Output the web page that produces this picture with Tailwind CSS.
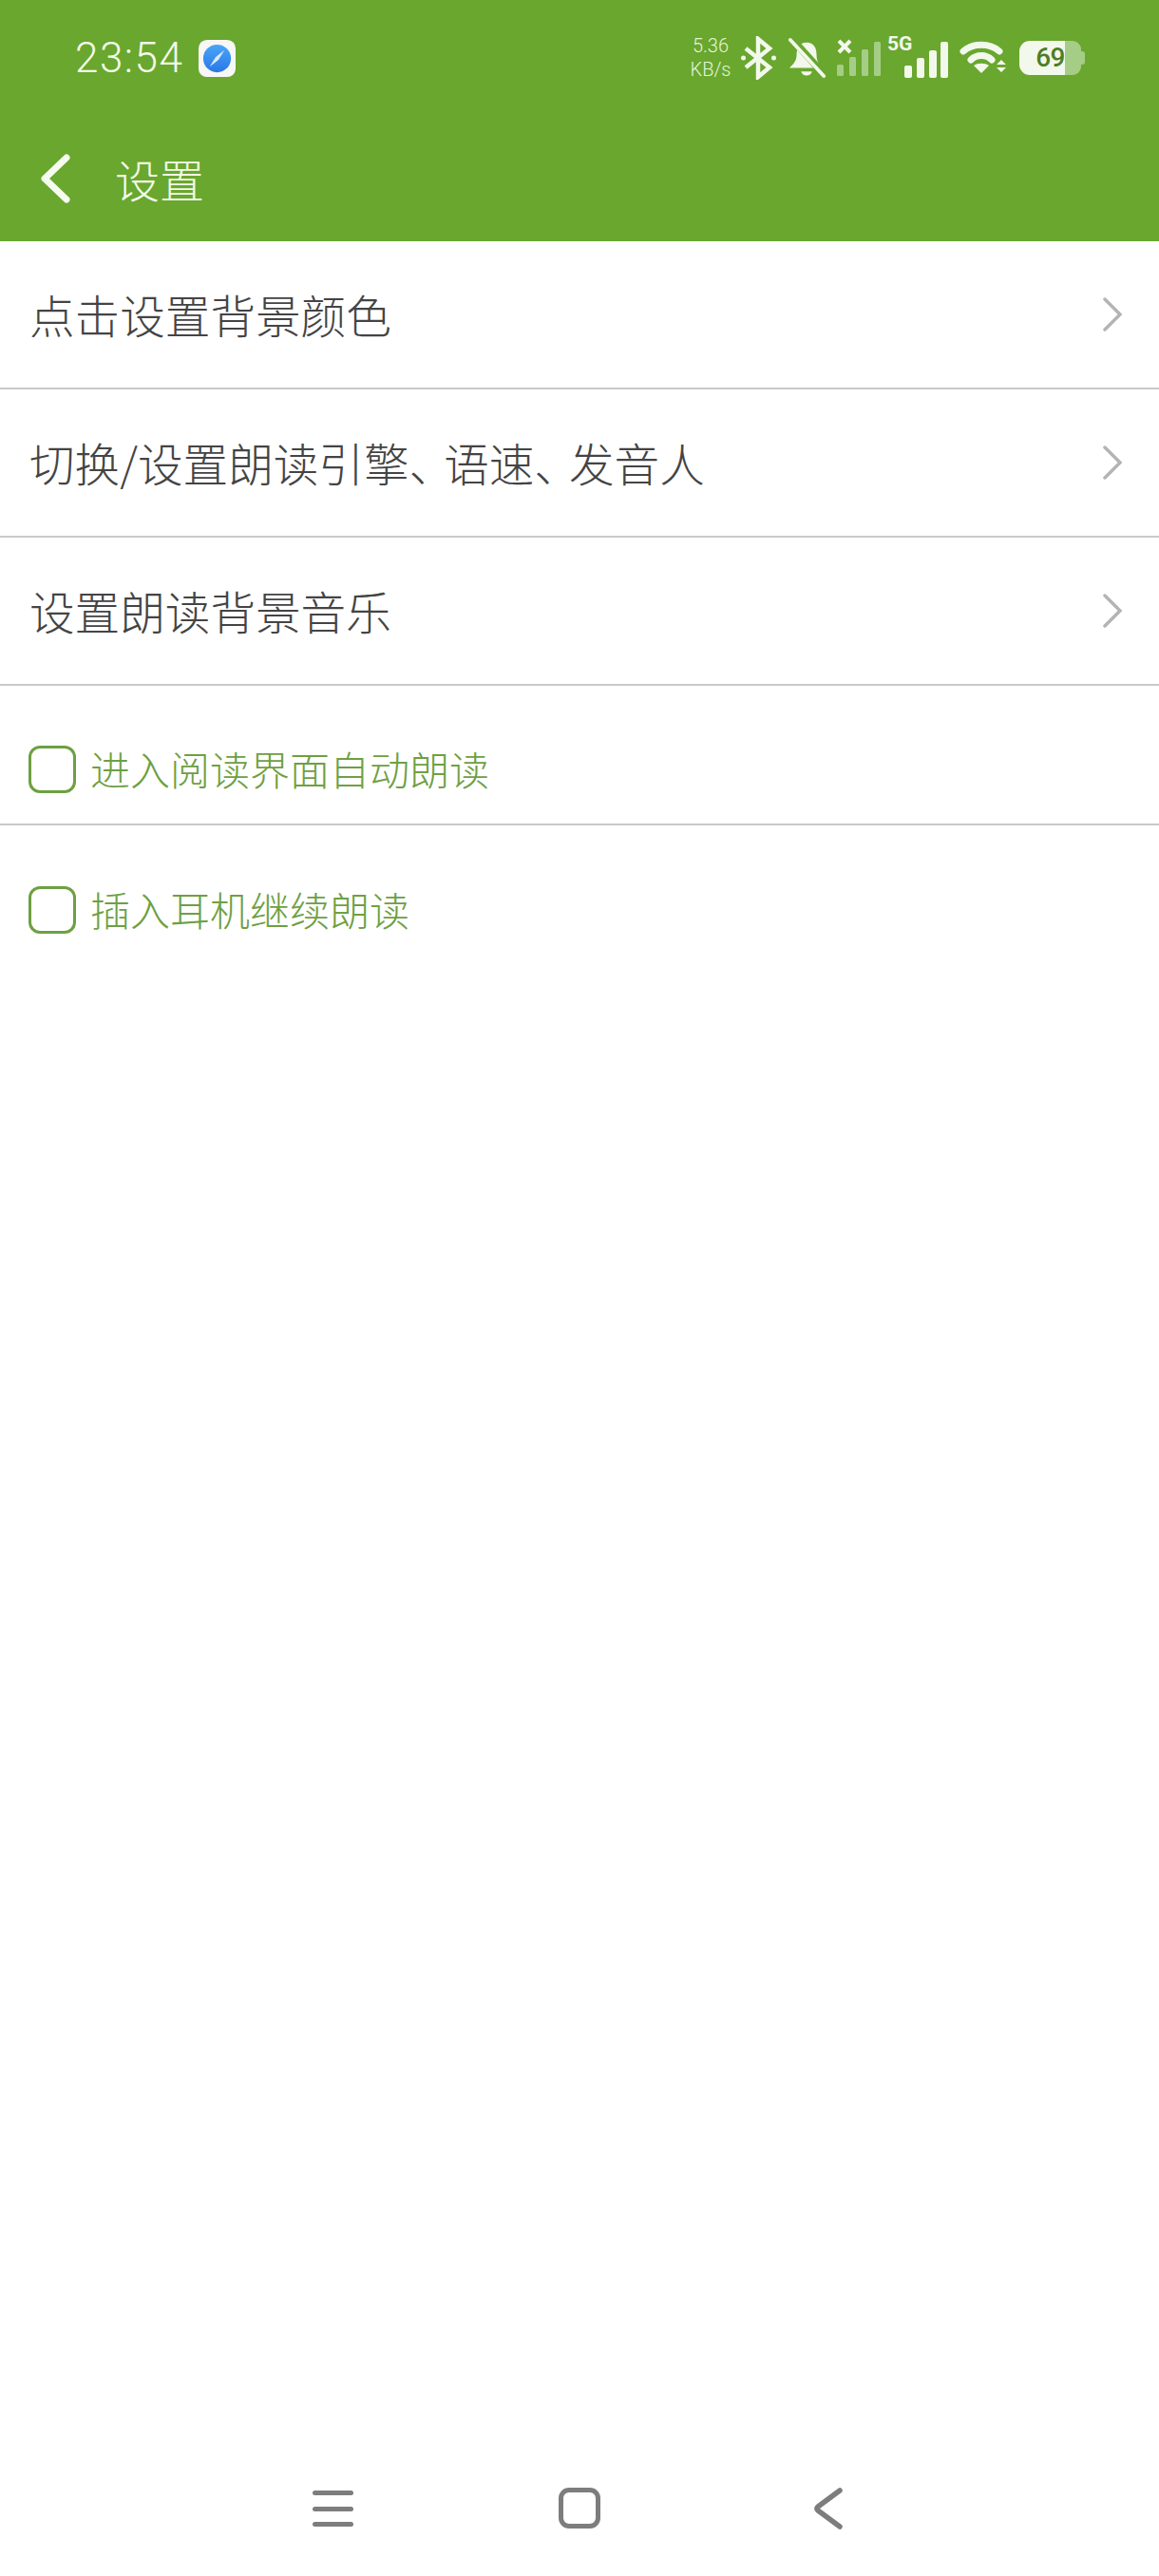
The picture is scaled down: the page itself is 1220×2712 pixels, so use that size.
<!DOCTYPE html>
<html lang="zh-CN">
<head>
<meta charset="utf-8">
<title>设置</title>
<script src="https://cdn.jsdelivr.net/npm/@tailwindcss/browser@4"></script>
</head>
<body class="m-0 bg-white font-['Noto_Sans_CJK_SC','Noto_Sans',sans-serif]">
<div class="relative flex h-[2712px] w-[1220px] flex-col overflow-hidden bg-white">
  <header class="flex h-[254px] flex-col bg-[#69a72e] text-[#f3fbe9]">
    <div class="flex h-[122px] items-center justify-between pl-[79px] pr-[77px]">
      <div class="flex items-center gap-[16px]">
        <span class="font-['Roboto',sans-serif] text-[44px] leading-none font-light tracking-[1.5px]">23:54</span>
        <svg width="39" height="39" viewBox="0 0 40 40">
          <defs><linearGradient id="compass" x1="0" y1="0" x2="0" y2="1"><stop offset="0" stop-color="#4aa5f7"/><stop offset="1" stop-color="#2a78e6"/></linearGradient></defs>
          <rect width="40" height="40" rx="9" fill="#f7f7f5"/>
          <circle cx="20" cy="20" r="15" fill="url(#compass)"/>
          <path d="M28 11 L21.5 21.5 L12 29 L18.5 18.5 Z" fill="#d6eafc"/>
        </svg>
      </div>
      <div class="flex items-center">
        <div class="flex w-[44px] flex-col items-center font-['Roboto',sans-serif] text-[20px] leading-[25px] font-light text-[#e6f3d8]">
          <span>5.36</span><span>KB/s</span>
        </div>
        <svg class="ml-[9px]" width="40" height="46" viewBox="0 0 40 46" fill="none" stroke="#f3f8ec" stroke-width="4.5">
          <path d="M6 13 L31 33 L19 43 V3 L31 13 L6 33"/>
          <circle cx="3.5" cy="23" r="2.5" fill="#f3f8ec" stroke="none"/>
          <circle cx="35.5" cy="23" r="2.5" fill="#f3f8ec" stroke="none"/>
        </svg>
        <svg class="ml-[11px]" width="40" height="44" viewBox="0 0 42 44">
          <path d="M20 5 C28 5 31 11 31 18 C31 25 33 28 37 33 H1 C6 28 9 25 9 18 C9 11 12 5 20 5 Z" fill="#f3f8ec"/>
          <path d="M14 37 H26 C25 43 15 43 14 37 Z" fill="#f3f8ec"/>
          <path d="M3 0 L40 41" stroke="#69a72e" stroke-width="8"/>
          <path d="M2 2 L39 42" stroke="#f3f8ec" stroke-width="4" stroke-linecap="round"/>
        </svg>
        <svg class="ml-[10px]" width="48" height="40" viewBox="0 0 48 40">
          <path d="M3 2 L15 14 M15 2 L3 14" stroke="#f3f8ec" stroke-width="4" fill="none"/>
          <rect x="1" y="27" width="7" height="12" rx="1.5" fill="#a5cd86"/>
          <rect x="14" y="19" width="7" height="20" rx="1.5" fill="#a5cd86"/>
          <rect x="27" y="11" width="7" height="28" rx="1.5" fill="#a5cd86"/>
          <rect x="40" y="3" width="7" height="36" rx="1.5" fill="#a5cd86"/>
        </svg>
        <div class="relative ml-[6px] h-[42px] w-[64px]">
          <span class="absolute left-0 top-[-4px] font-['Roboto',sans-serif] text-[21px] leading-none font-bold text-[#f3f8ec]">5G</span>
          <svg class="absolute bottom-0 right-0" width="46" height="38" viewBox="0 0 46 38" fill="#f3f8ec">
            <rect x="0" y="25" width="8" height="13" rx="2"/>
            <rect x="13" y="17" width="8" height="21" rx="2"/>
            <rect x="26" y="9" width="8" height="29" rx="2"/>
            <rect x="38" y="0" width="8" height="38" rx="2"/>
          </svg>
        </div>
        <svg class="ml-[12px]" width="51" height="36" viewBox="0 0 51 36" fill="none" stroke="#f3f8ec" stroke-width="7" stroke-linecap="round">
          <path d="M4 11 C14 2 32 2 42 11"/>
          <path d="M12 20 C18 14 28 14 34 20"/>
          <path d="M23 34 L15 26 C19 23 27 23 31 26 Z" fill="#f3f8ec" stroke="none"/>
          <path d="M44 20 L49 25 H39 Z M39 28 H49 L44 33 Z" fill="#f3f8ec" stroke="none"/>
        </svg>
        <div class="relative ml-[12px] flex h-[36px] w-[70px] items-center">
          <div class="flex h-[36px] w-[48px] items-center justify-end rounded-l-[11px] bg-[#f3f8ec]">
            <span class="font-['Roboto',sans-serif] text-[28px] leading-none font-medium tracking-[-0.5px] text-[#4c7f26]">69</span>
          </div>
          <div class="h-[36px] w-[17px] rounded-r-[9px] bg-[#a5cd86]"></div>
          <div class="h-[14px] w-[4px] rounded-r-[3px] bg-[#a5cd86]"></div>
        </div>
      </div>
    </div>
    <div class="flex h-[132px] items-center pb-[2px]">
      <svg class="ml-[42px] mt-[2px]" width="32" height="52" viewBox="0 0 32 52" fill="none" stroke="#f6fbef" stroke-width="7" stroke-linecap="round" stroke-linejoin="round">
        <path d="M28 4 L5 26 L28 48"/>
      </svg>
      <span class="ml-[47px] text-[47px] leading-none font-light">设置</span>
    </div>
  </header>

  <main class="flex flex-col">
    <div class="flex h-[156px] items-center justify-between border-b-2 border-[#c9c9c9] pl-[31px] pr-[39px] text-[47.6px] font-light text-[#444444]">
      <span>点击设置背景颜色</span>
      <svg width="20" height="36" viewBox="0 0 20 36" fill="none" stroke="#b4b4b4" stroke-width="3.5" stroke-linecap="round"><path d="M2 2 L18 18 L2 34"/></svg>
    </div>
    <div class="flex h-[156px] items-center justify-between border-b-2 border-[#c9c9c9] pl-[31px] pr-[39px] text-[47.6px] font-light text-[#444444]">
      <span>切换/设置朗读引擎<span class="tracking-[-11px]">、</span>语速<span class="tracking-[-11px]">、</span>发音人</span>
      <svg width="20" height="36" viewBox="0 0 20 36" fill="none" stroke="#b4b4b4" stroke-width="3.5" stroke-linecap="round"><path d="M2 2 L18 18 L2 34"/></svg>
    </div>
    <div class="flex h-[156px] items-center justify-between border-b-2 border-[#c9c9c9] pl-[31px] pr-[39px] text-[47.6px] font-light text-[#444444]">
      <span>设置朗读背景音乐</span>
      <svg width="20" height="36" viewBox="0 0 20 36" fill="none" stroke="#b4b4b4" stroke-width="3.5" stroke-linecap="round"><path d="M2 2 L18 18 L2 34"/></svg>
    </div>
    <label class="flex h-[147px] items-center gap-[15px] border-b-2 border-[#c9c9c9] pl-[30px] pt-[30px] text-[42px] font-light text-[#6da042]">
      <span class="h-[50px] w-[50px] rounded-[12px] border-[3.5px] border-[#6da042]"></span>
      <span class="mb-[3px]">进入阅读界面自动朗读</span>
    </label>
    <label class="flex h-[147px] items-center gap-[15px] pl-[30px] pt-[30px] text-[42px] font-light text-[#6da042]">
      <span class="h-[50px] w-[50px] rounded-[12px] border-[3.5px] border-[#6da042]"></span>
      <span class="mb-[3px]">插入耳机继续朗读</span>
    </label>
  </main>

  <nav class="mt-auto flex h-[92px] items-start">
    <div class="ml-[329px] mt-[2px] flex w-[43px] flex-col gap-[11.5px]">
      <span class="h-[5px] rounded-full bg-[#7d7d7d]"></span>
      <span class="h-[5px] rounded-full bg-[#7d7d7d]"></span>
      <span class="h-[5px] rounded-full bg-[#7d7d7d]"></span>
    </div>
    <span class="ml-[216px] mt-[-1px] h-[43px] w-[44px] rounded-[11px] border-[5px] border-[#7d7d7d]"></span>
    <svg class="ml-[224px] mt-[-1px]" width="32" height="46" viewBox="0 0 32 46" fill="none" stroke="#7d7d7d" stroke-width="5.5" stroke-linecap="round" stroke-linejoin="round"><path d="M28 3 L5 20 Q3 22 5 24 L28 41"/></svg>
  </nav>
</div>
</body>
</html>
